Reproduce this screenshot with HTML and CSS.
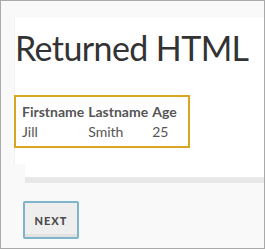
FILE: index.html
```html
<!DOCTYPE html>
<html>
  <head>
    <title>Returned HTML</title>
    <link rel="stylesheet" href="styles.css">
  </head>
  <body>
    <div class="frame">
      <div class="card">
        <div class="output">
          <h1>Returned HTML</h1>
          <table class="people">
            <tr>
              <th>Firstname</th>
              <th>Lastname</th>
              <th>Age</th>
            </tr>
            <tr>
              <td>Jill</td>
              <td>Smith</td>
              <td>25</td>
            </tr>
          </table>
        </div>
      </div>
      <button class="next">NEXT</button>
    </div>
  </body>
</html>
```
FILE: styles.css
```css
html, body {
  margin: 0;
  padding: 0;
}
.frame {
  box-sizing: border-box;
  width: 265px;
  height: 249px;
  border: 1px solid #a9a9a9;
  background-color: #f9f9f9;
  padding-top: 16px;
  font-family: Lato, sans-serif;
}
.card {
  margin-left: 24px;
  height: 160px;
  background-color: #fff;
  box-shadow: 0 6px 0 #e8e8e8;
}
.output {
  margin-left: -11px;
  height: 147px;
  background-color: #fff;
  border-left: 1px solid #f0f0f0;
}
h1 {
  margin: 0;
  padding-top: 9px;
  font-size: 34px;
  line-height: 44px;
  font-weight: normal;
  letter-spacing: -0.6px;
  white-space: nowrap;
  color: #333;
}
.people {
  margin-top: 25px;
  margin-left: -1px;
  border: 2px solid #daa520;
  border-collapse: separate;
  border-spacing: 0;
  padding: 4px 7px 5px 6px;
  color: #555;
  font-size: 14px;
}
.people th, .people td {
  text-align: left;
  padding: 0 4px 0 0;
  height: 20px;
}
.people th {
  font-weight: bold;
}
.next {
  display: block;
  margin: 24px 0 0 22px;
  width: 56px;
  height: 38px;
  border: 2px solid #7eb4cc;
  border-radius: 2px;
  background-color: #eee;
  box-shadow: inset 0 -3px 0 #e2e2e2;
  color: #4a4a4a;
  font-family: Lato, sans-serif;
  font-size: 11px;
  font-weight: 900;
  letter-spacing: 1px;
  padding: 0;
}
```
